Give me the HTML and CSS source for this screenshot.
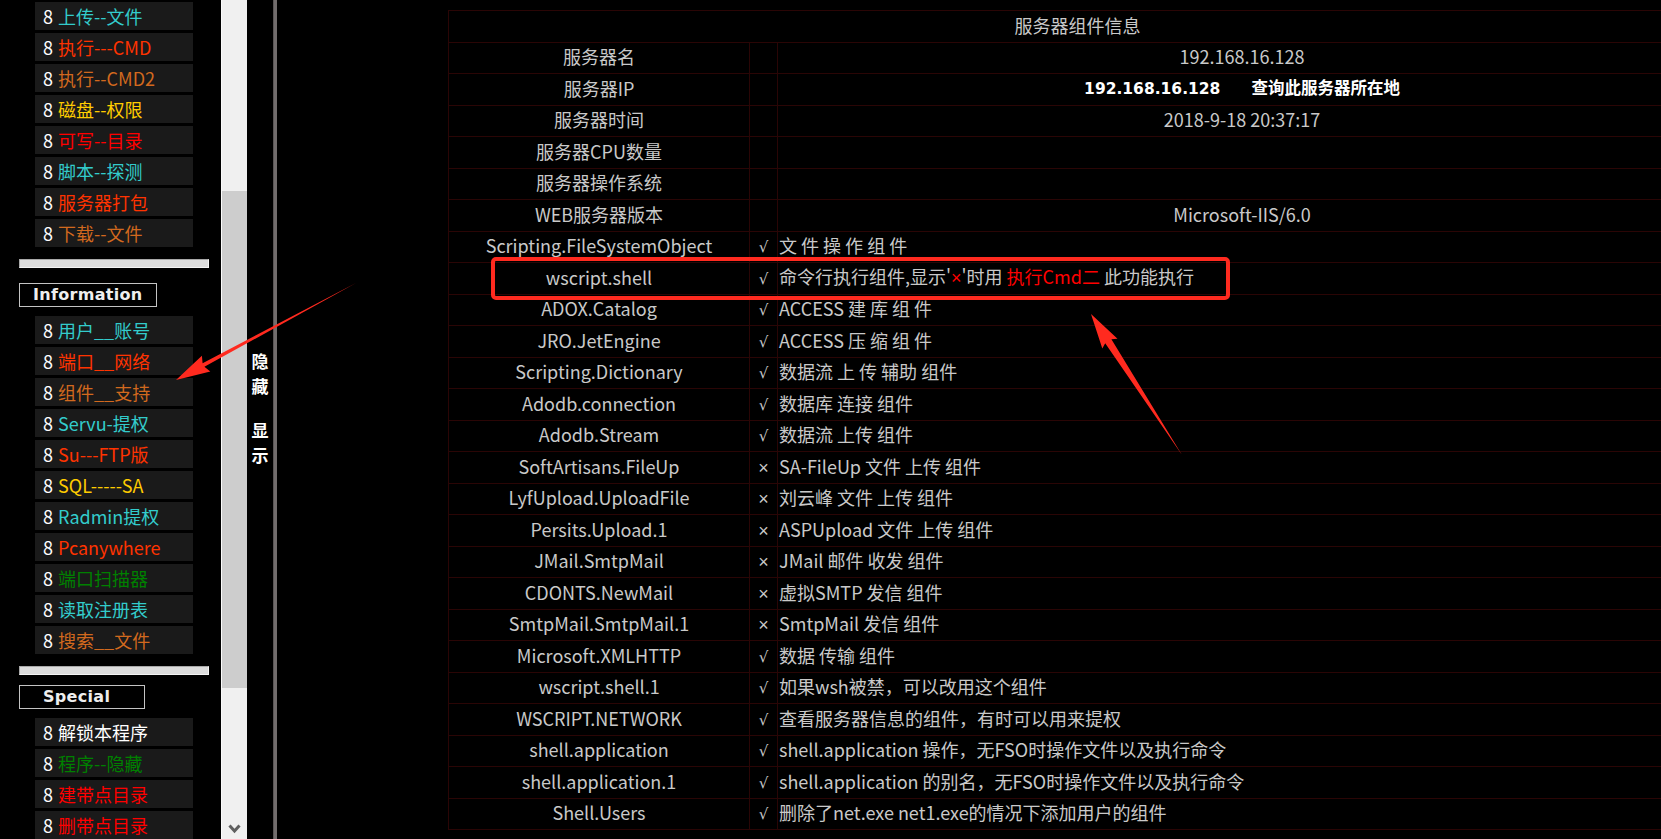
FILE: index.html
```html
<!DOCTYPE html>
<html lang="zh-CN">
<head>
<meta charset="utf-8">
<title>服务器组件信息</title>
<link rel="stylesheet" href="styles.css">
</head>
<body>
<div class="frame">
  <aside class="sidebar">
    <ul class="menu">
      <li><span class="n">8</span> <span class="turq">上传--文件</span></li>
      <li><span class="n">8</span> <span class="orange">执行---CMD</span></li>
      <li><span class="n">8</span> <span class="choc">执行--CMD2</span></li>
      <li><span class="n">8</span> <span class="gold">磁盘--权限</span></li>
      <li><span class="n">8</span> <span class="red">可写--目录</span></li>
      <li><span class="n">8</span> <span class="turq">脚本--探测</span></li>
      <li><span class="n">8</span> <span class="orange">服务器打包</span></li>
      <li><span class="n">8</span> <span class="choc">下载--文件</span></li>
    </ul>
    <div class="sep sep-a"></div>
    <div class="section-title info">Information</div>
    <ul class="menu menu-b">
      <li><span class="n">8</span> <span class="turq">用户__账号</span></li>
      <li><span class="n">8</span> <span class="orange">端口__网络</span></li>
      <li><span class="n">8</span> <span class="choc">组件__支持</span></li>
      <li><span class="n">8</span> <span class="turq">Servu-提权</span></li>
      <li><span class="n">8</span> <span class="orange">Su---FTP版</span></li>
      <li><span class="n">8</span> <span class="gold">SQL-----SA</span></li>
      <li><span class="n">8</span> <span class="turq">Radmin提权</span></li>
      <li><span class="n">8</span> <span class="orange">Pcanywhere</span></li>
      <li><span class="n">8</span> <span class="green">端口扫描器</span></li>
      <li><span class="n">8</span> <span class="turq">读取注册表</span></li>
      <li><span class="n">8</span> <span class="choc">搜索__文件</span></li>
    </ul>
    <div class="sep sep-b"></div>
    <div class="section-title special">Special</div>
    <ul class="menu menu-b">
      <li><span class="n">8</span> <span class="white">解锁本程序</span></li>
      <li><span class="n">8</span> <span class="green">程序--隐藏</span></li>
      <li><span class="n">8</span> <span class="red">建带点目录</span></li>
      <li><span class="n">8</span> <span class="red">删带点目录</span></li>
    </ul>
  </aside>

  <div class="scrollbar">
    <div class="track track-top"></div>
    <div class="thumb"></div>
    <div class="track track-bottom">
      <svg class="chev" width="13" height="10" viewBox="0 0 13 10"><path d="M1.5 1.5 L6.5 7 L11.5 1.5" fill="none" stroke="#606060" stroke-width="3"/></svg>
    </div>
  </div>

  <div class="toggle">
    <span>隐</span><span>藏</span><span class="gap">显</span><span>示</span>
  </div>
  <div class="divider"></div>

  <main class="main">
    <table class="info-table">
      <colgroup><col class="c1"><col class="c2"><col class="c3"></colgroup>
      <tr><td colspan="3" class="center">服务器组件信息</td></tr>
      <tr><td class="center">服务器名</td><td></td><td class="center">192.168.16.128</td></tr>
      <tr><td class="center">服务器IP</td><td></td><td class="center strong"><span class="ip">192.168.16.128</span><span class="locate">查询此服务器所在地</span></td></tr>
      <tr><td class="center">服务器时间</td><td></td><td class="center">2018-9-18 20:37:17</td></tr>
      <tr><td class="center">服务器CPU数量</td><td></td><td class="center"></td></tr>
      <tr><td class="center">服务器操作系统</td><td></td><td class="center"></td></tr>
      <tr><td class="center">WEB服务器版本</td><td></td><td class="center">Microsoft-IIS/6.0</td></tr>
      <tr><td class="center">Scripting.FileSystemObject</td><td class="mark">√</td><td class="desc">文 件 操 作 组 件</td></tr>
      <tr><td class="center">wscript.shell</td><td class="mark">√</td><td class="desc">命令行执行组件,显示'<span class="hot x">×</span>'时用 <span class="hot">执行Cmd二</span> 此功能执行</td></tr>
      <tr><td class="center">ADOX.Catalog</td><td class="mark">√</td><td class="desc">ACCESS 建 库 组 件</td></tr>
      <tr><td class="center">JRO.JetEngine</td><td class="mark">√</td><td class="desc">ACCESS 压 缩 组 件</td></tr>
      <tr><td class="center">Scripting.Dictionary</td><td class="mark">√</td><td class="desc">数据流 上 传 辅助 组件</td></tr>
      <tr><td class="center">Adodb.connection</td><td class="mark">√</td><td class="desc">数据库 连接 组件</td></tr>
      <tr><td class="center">Adodb.Stream</td><td class="mark">√</td><td class="desc">数据流 上传 组件</td></tr>
      <tr><td class="center">SoftArtisans.FileUp</td><td class="mark no">×</td><td class="desc">SA-FileUp 文件 上传 组件</td></tr>
      <tr><td class="center">LyfUpload.UploadFile</td><td class="mark no">×</td><td class="desc">刘云峰 文件 上传 组件</td></tr>
      <tr><td class="center">Persits.Upload.1</td><td class="mark no">×</td><td class="desc">ASPUpload 文件 上传 组件</td></tr>
      <tr><td class="center">JMail.SmtpMail</td><td class="mark no">×</td><td class="desc">JMail 邮件 收发 组件</td></tr>
      <tr><td class="center">CDONTS.NewMail</td><td class="mark no">×</td><td class="desc">虚拟SMTP 发信 组件</td></tr>
      <tr><td class="center">SmtpMail.SmtpMail.1</td><td class="mark no">×</td><td class="desc">SmtpMail 发信 组件</td></tr>
      <tr><td class="center">Microsoft.XMLHTTP</td><td class="mark">√</td><td class="desc">数据 传输 组件</td></tr>
      <tr><td class="center">wscript.shell.1</td><td class="mark">√</td><td class="desc">如果wsh被禁，可以改用这个组件</td></tr>
      <tr><td class="center">WSCRIPT.NETWORK</td><td class="mark">√</td><td class="desc">查看服务器信息的组件，有时可以用来提权</td></tr>
      <tr><td class="center">shell.application</td><td class="mark">√</td><td class="desc">shell.application 操作，无FSO时操作文件以及执行命令</td></tr>
      <tr><td class="center">shell.application.1</td><td class="mark">√</td><td class="desc">shell.application 的别名，无FSO时操作文件以及执行命令</td></tr>
      <tr><td class="center">Shell.Users</td><td class="mark">√</td><td class="desc">删除了net.exe net1.exe的情况下添加用户的组件</td></tr>
    </table>
  </main>
</div>

<div class="highlight"></div>
<svg class="arrows" width="1661" height="839" viewBox="0 0 1661 839">
  <polygon points="356,283 204.4,366.8 210.3,371.5 176,380 201.9,355.7 202.6,363.2" fill="#ff2a1f"/>
  <polygon points="1182,455 1111.4,339.2 1117.5,338.8 1091,314 1102.3,348.6 1105.2,343.2" fill="#ff2a1f"/>
</svg>
</body>
</html>
```

FILE: styles.css
```css
html, body {
  margin: 0;
  padding: 0;
  background: #000;
}

body {
  font-family: "Noto Sans CJK SC", "Noto Sans", sans-serif;
  width: 1661px;
  height: 839px;
  overflow: hidden;
  position: relative;
}

.frame {
  display: flex;
  width: 1661px;
  height: 839px;
  overflow: hidden;
}

/* ---------- left menu ---------- */
.sidebar {
  width: 221px;
  flex: none;
  display: flex;
  flex-direction: column;
  padding-top: 2px;
  box-sizing: border-box;
  overflow: hidden;
}

.menu {
  list-style: none;
  margin: 0;
  padding: 0 0 0 35px;
  display: flex;
  flex-direction: column;
  gap: 3px;
}

.menu-b {
  margin-top: 9px;
}

.menu li {
  width: 158px;
  height: 28px;
  flex: none;
  box-sizing: border-box;
  padding-left: 8px;
  background: #1a1a1a;
  font-size: 18px;
  line-height: 28px;
  white-space: nowrap;
  color: #fff;
  word-spacing: 1px;
}

.n { color: #fff; }
.turq { color: #33cccc; }
.orange { color: #ff3300; }
.choc { color: #d2691e; }
.gold { color: #ffcc00; }
.red { color: #ff0000; }
.green { color: #008000; }
.white { color: #fff; }

.sep {
  margin-left: 19px;
  width: 190px;
  height: 9px;
  box-sizing: border-box;
  background: #dcdcdc;
  border: 1px solid;
  border-color: #a8a8a8 #f4f4f4 #f4f4f4 #a8a8a8;
  flex: none;
}

.sep-a { margin-top: 12px; }
.sep-b { margin-top: 12px; }

.section-title {
  margin-left: 19px;
  height: 24px;
  box-sizing: border-box;
  border: 1px solid #c4c4c4;
  font-family: "DejaVu Sans", "Liberation Sans", sans-serif;
  font-weight: bold;
  font-size: 16px;
  letter-spacing: 0.3px;
  line-height: 22px;
  color: #eeeeee;
  flex: none;
}

.info {
  margin-top: 15px;
  width: 138px;
  padding-left: 13px;
}

.special {
  margin-top: 10px;
  width: 126px;
  padding-left: 23px;
}

/* ---------- scrollbar ---------- */
.scrollbar {
  width: 26px;
  flex: none;
  display: flex;
  flex-direction: column;
  background: #f0f0f0;
  border-left: 1px solid #fbfbfb;
  box-sizing: border-box;
}

.track-top {
  height: 191px;
  flex: none;
}

.thumb {
  height: 497px;
  flex: none;
  background: #cdcdcd;
}

.track-bottom {
  flex: 1;
  display: flex;
  align-items: flex-end;
  justify-content: center;
  padding-bottom: 5px;
}

.chev { display: block; }

/* ---------- toggle strip ---------- */
.toggle {
  width: 26px;
  flex: none;
  display: flex;
  flex-direction: column;
  align-items: center;
  padding-top: 348px;
  box-sizing: border-box;
  color: #fff;
  font-weight: bold;
  font-size: 17px;
  line-height: 25px;
}

.toggle .gap {
  margin-top: 19px;
}

.divider {
  width: 4px;
  flex: none;
  background: #726d6d;
  border-left: 1px solid #5a5656;
  box-sizing: border-box;
}

/* ---------- main table ---------- */
.main {
  flex: 1;
  min-width: 0;
  overflow: hidden;
  padding: 10px 0 0 171px;
}

.info-table {
  width: 1258px;
  table-layout: fixed;
  border-collapse: collapse;
  color: #c9c9c9;
  font-size: 18px;
}

.c1 { width: 301px; }
.c2 { width: 28px; }
.c3 { width: 929px; }

.info-table tr {
  height: 31.5px;
}

.info-table td {
  border: 1px solid #2a0505;
  padding: 0 0 3px 0;
  line-height: 22px;
  white-space: nowrap;
  overflow: hidden;
}

.center { text-align: center; }

.info-table td.mark {
  text-align: center;
  font-family: "DejaVu Sans", "Liberation Sans", sans-serif;
  font-size: 15px;
  padding: 1px 0 0 0;
}

.info-table td.mark.no {
  font-family: "Liberation Sans", sans-serif;
  font-size: 18px;
}

.info-table td.desc {
  text-align: left;
  padding-left: 1px;
}

.strong {
  color: #fff;
  font-weight: bold;
}

.ip {
  font-family: "DejaVu Sans", "Liberation Sans", sans-serif;
  font-size: 15.5px;
}

.locate {
  font-size: 16.5px;
  margin-left: 31px;
}

.hot { color: #ff0000; }

.x {
  font-family: "Liberation Sans", sans-serif;
}

/* ---------- annotations ---------- */
.highlight {
  position: absolute;
  left: 491px;
  top: 257px;
  width: 739px;
  height: 43px;
  box-sizing: border-box;
  border: 4px solid #ff2a1f;
  border-radius: 5px;
  pointer-events: none;
}

.arrows {
  position: absolute;
  left: 0;
  top: 0;
  pointer-events: none;
}
```
